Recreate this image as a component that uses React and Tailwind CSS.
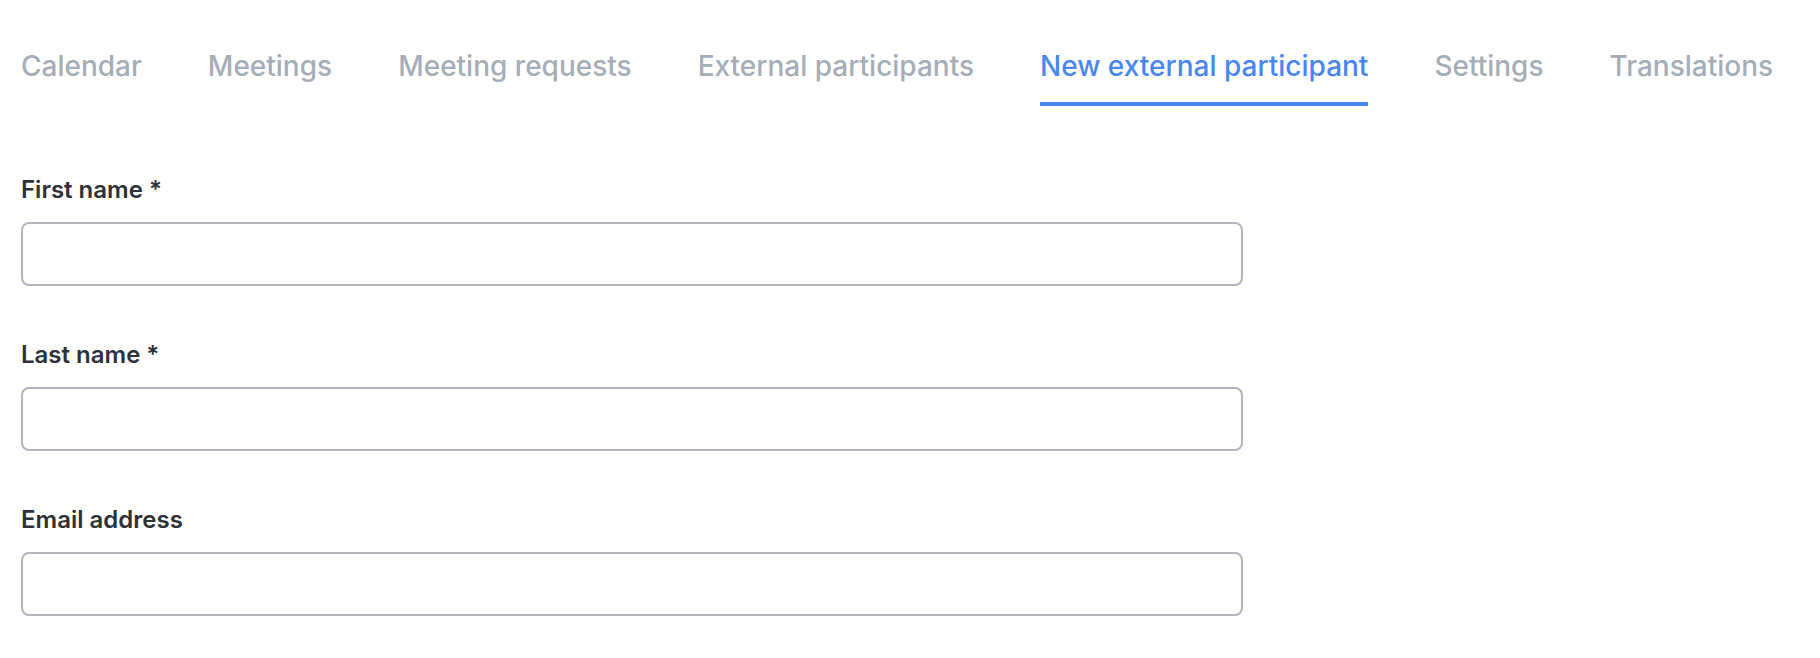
import { useState } from "react";

const TABS = [
  "Calendar",
  "Meetings",
  "Meeting requests",
  "External participants",
  "New external participant",
  "Settings",
  "Translations",
];

const FIELDS = [
  { id: "first", label: "First name *" },
  { id: "last", label: "Last name *" },
  { id: "email", label: "Email address" },
];

export default function App() {
  const [active, setActive] = useState("New external participant");

  return (
    <div className="min-h-[658px] bg-white pl-[21px] pt-[46px] font-['Inter',sans-serif]">
      <nav className="flex gap-[66px]">
        {TABS.map((tab) => (
          <button
            key={tab}
            type="button"
            onClick={() => setActive(tab)}
            className={
              tab === active
                ? "border-b-4 border-[#4a86f0] pb-4 text-[28px] font-medium leading-[40px] text-[#4a86f0]"
                : "border-b-4 border-transparent pb-4 text-[28px] font-medium leading-[40px] text-[#a6adb7]"
            }
          >
            {tab}
          </button>
        ))}
      </nav>

      <form className="mt-[68px] flex w-[1222px] flex-col gap-[53px]">
        {FIELDS.map((field) => (
          <div key={field.id} className="flex flex-col">
            <label
              htmlFor={field.id}
              className="mb-[16px] text-[24px] font-semibold leading-[32px] text-[#2e3137]"
            >
              {field.label}
            </label>
            <input
              id={field.id}
              type={field.id === "email" ? "email" : "text"}
              className="h-[64px] rounded-lg border-2 border-[#b0b5be] bg-white px-4 text-[24px] outline-none"
            />
          </div>
        ))}
      </form>
    </div>
  );
}
